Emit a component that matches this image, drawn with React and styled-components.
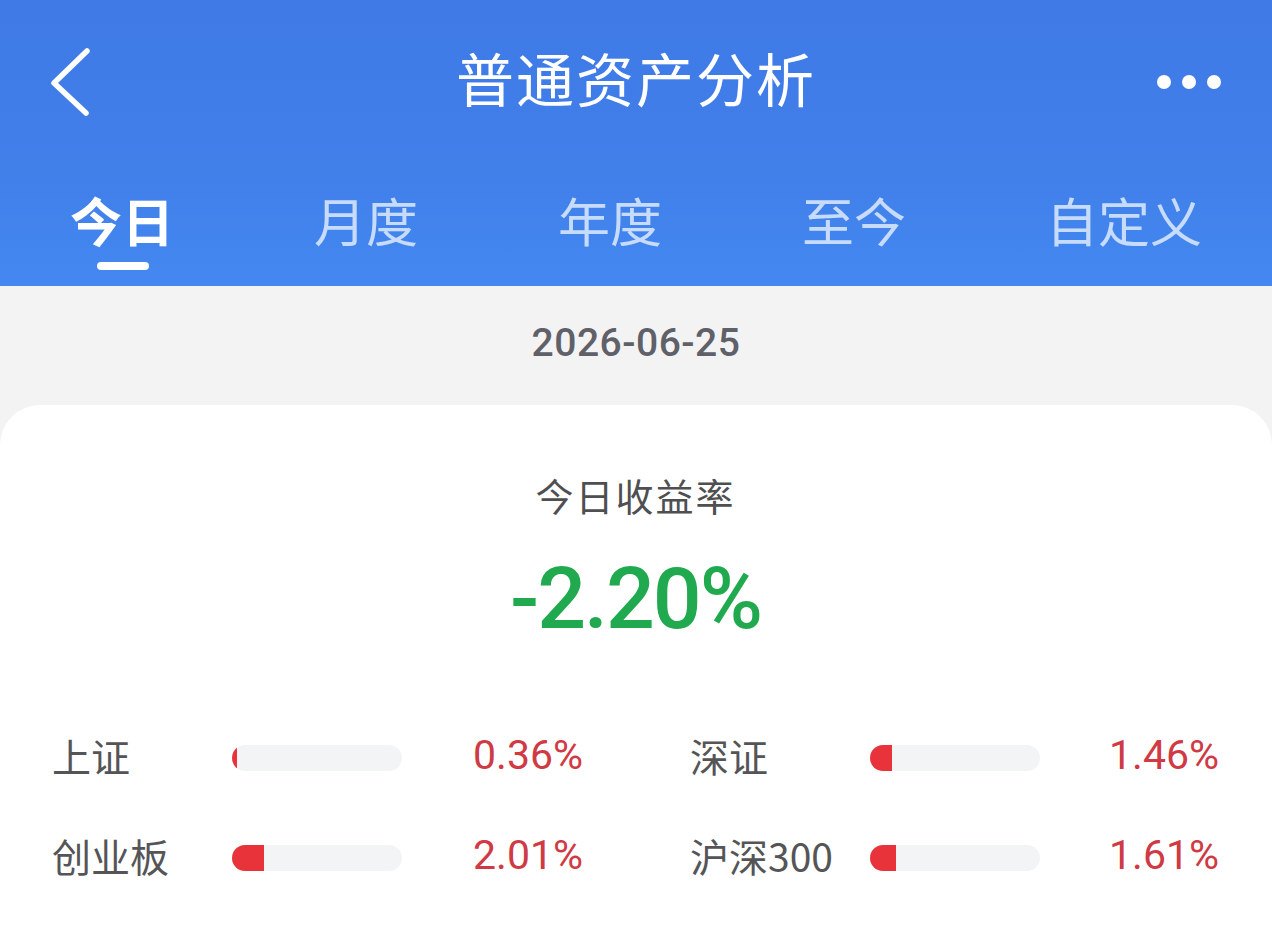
import React from 'react';
import styled, { createGlobalStyle } from 'styled-components';

const GlobalStyle = createGlobalStyle`
  html, body {
    margin: 0;
    padding: 0;
    background: #f3f3f4;
    font-family: Roboto, "Noto Sans CJK SC", sans-serif;
  }
`;

const Page = styled.div`
  width: 1272px;
  height: 930px;
  overflow: hidden;
  background: #f3f3f4;
`;

const Header = styled.header`
  height: 286px;
  background: linear-gradient(180deg, #3f7ae6 0%, #417fe9 60%, #4388f0 100%);
  color: #fff;
  display: flex;
  flex-direction: column;
`;

const TopBar = styled.div`
  height: 160px;
  display: flex;
  align-items: center;
  justify-content: space-between;
  padding: 0 50px 0 48px;
  position: relative;
`;

const Title = styled.h1`
  position: absolute;
  left: 0;
  right: 0;
  top: 43px;
  margin: 0;
  text-align: center;
  font-family: "Noto Sans CJK SC", sans-serif;
  font-weight: 400;
  font-size: 58px;
  line-height: 68px;
  letter-spacing: 2px;
  pointer-events: none;
`;

const IconButton = styled.button`
  border: 0;
  background: none;
  padding: 0;
  color: #fff;
  display: flex;
  align-items: center;
  margin-top: ${p => p.$offset || 0}px;
`;

const Tabs = styled.nav`
  display: flex;
  justify-content: space-between;
  padding: 0 70px 0 70px;
  height: 126px;
`;

const Tab = styled.div`
  position: relative;
  font-family: "Noto Sans CJK SC", sans-serif;
  font-size: 52px;
  line-height: 60px;
  padding-top: 30px;
  font-weight: ${p => (p.$active ? 700 : 400)};
  color: ${p => (p.$active ? '#ffffff' : 'rgba(222, 235, 255, 0.85)')};

  &::after {
    content: '';
    display: ${p => (p.$active ? 'block' : 'none')};
    position: absolute;
    left: 50%;
    top: 102px;
    width: 52px;
    height: 8px;
    margin-left: -25px;
    border-radius: 4px;
    background: #fff;
  }
`;

const DateBar = styled.div`
  height: 119px;
  display: flex;
  align-items: center;
  justify-content: center;
  font-size: 39px;
  font-weight: 500;
  color: #5f6068;
  letter-spacing: 0.5px;
  padding-bottom: 6px;
  box-sizing: border-box;
`;

const Card = styled.section`
  background: #fff;
  border-radius: 40px 40px 0 0;
  height: 525px;
  padding: 70px 53px 0 52px;
  box-sizing: border-box;
`;

const RateLabel = styled.div`
  text-align: center;
  font-family: "Noto Sans CJK SC", sans-serif;
  font-size: 38px;
  line-height: 40px;
  color: #4f4f52;
  letter-spacing: 2px;
`;

const RateValue = styled.div`
  text-align: center;
  font-size: 86px;
  font-weight: 500;
  line-height: 100px;
  margin-top: 34px;
  color: #20a94e;
  letter-spacing: -2px;
`;

const IndexGrid = styled.div`
  display: grid;
  grid-template-columns: 531px 529px;
  column-gap: 107px;
  row-gap: 70px;
  margin-top: 78px;
`;

const IndexRow = styled.div`
  display: grid;
  grid-template-columns: 180px 170px 1fr;
  align-items: center;
  height: 30px;
`;

const IndexName = styled.span`
  font-family: "Noto Sans CJK SC", sans-serif;
  font-size: 39px;
  color: #555558;
  white-space: nowrap;
`;

const Track = styled.div`
  height: 26px;
  margin-top: 5px;
  border-radius: 13px;
  background: #f3f4f5;
  overflow: hidden;
`;

const Fill = styled.div`
  height: 100%;
  background: #e8333b;
`;

const IndexValue = styled.span`
  text-align: right;
  font-size: 41px;
  color: #cf3a44;
`;

const indices = [
  { name: '上证', value: '0.36%', fill: 5 },
  { name: '深证', value: '1.46%', fill: 22 },
  { name: '创业板', value: '2.01%', fill: 32 },
  { name: '沪深300', value: '1.61%', fill: 26 },
];

const tabs = ['今日', '月度', '年度', '至今', '自定义'];

const App = () => (
  <Page>
    <GlobalStyle />
    <Header>
      <TopBar>
        <IconButton aria-label="返回" $offset={6}>
          <svg width="46" height="72" viewBox="0 0 46 72">
            <path d="M39 4 L6 36 L38 66" fill="none" stroke="#fff" strokeWidth="5.5" strokeLinecap="round" strokeLinejoin="round" />
          </svg>
        </IconButton>
        <Title>普通资产分析</Title>
        <IconButton aria-label="更多" $offset={4}>
          <svg width="66" height="16" viewBox="0 0 66 16">
            <circle cx="8" cy="8" r="7" fill="#fff" />
            <circle cx="33" cy="8" r="7" fill="#fff" />
            <circle cx="58" cy="8" r="7" fill="#fff" />
          </svg>
        </IconButton>
      </TopBar>
      <Tabs>
        {tabs.map((t, i) => (
          <Tab key={t} $active={i === 0}>{t}</Tab>
        ))}
      </Tabs>
    </Header>
    <DateBar>2026-06-25</DateBar>
    <Card>
      <RateLabel>今日收益率</RateLabel>
      <RateValue>-2.20%</RateValue>
      <IndexGrid>
        {indices.map(idx => (
          <IndexRow key={idx.name}>
            <IndexName>{idx.name}</IndexName>
            <Track>
              <Fill style={{ width: idx.fill }} />
            </Track>
            <IndexValue>{idx.value}</IndexValue>
          </IndexRow>
        ))}
      </IndexGrid>
    </Card>
  </Page>
);

export default App;
